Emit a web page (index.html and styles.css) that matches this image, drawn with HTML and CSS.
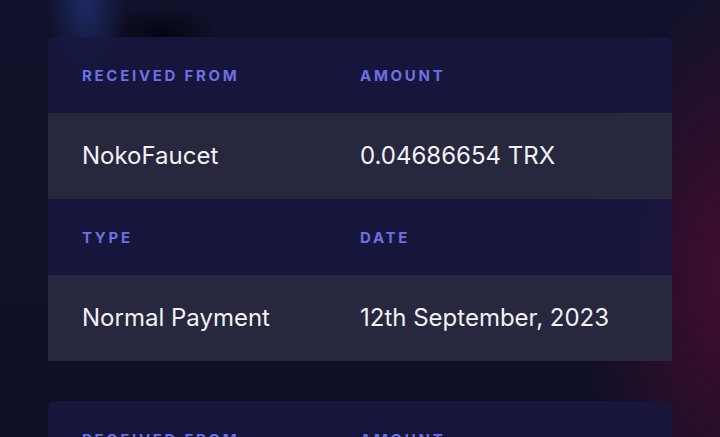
FILE: index.html
```html
<!DOCTYPE html>
<html lang="en">
<head>
<meta charset="utf-8">
<title>Transactions</title>
<link rel="stylesheet" href="styles.css">
</head>
<body>
<main class="page">
  <section class="card">
    <div class="row head">
      <div class="cell">Received From</div>
      <div class="cell">Amount</div>
    </div>
    <div class="row value">
      <div class="cell">NokoFaucet</div>
      <div class="cell">0.04686654 TRX</div>
    </div>
    <div class="row head">
      <div class="cell">Type</div>
      <div class="cell">Date</div>
    </div>
    <div class="row value">
      <div class="cell">Normal Payment</div>
      <div class="cell">12th September, 2023</div>
    </div>
  </section>
  <section class="card">
    <div class="row head">
      <div class="cell">Received From</div>
      <div class="cell">Amount</div>
    </div>
    <div class="row value">
      <div class="cell">NokoFaucet</div>
      <div class="cell">0.04686654 TRX</div>
    </div>
  </section>
</main>
</body>
</html>
```
FILE: styles.css
```css
html, body {
  margin: 0;
  height: 100%;
}
body {
  overflow: hidden;
  font-family: Inter, "Noto Sans", sans-serif;
  background-color: #0f0f25;
  background-image:
    radial-gradient(ellipse 40px 80px at 86px 0px, rgba(30, 44, 105, 0.95), rgba(30, 44, 105, 0) 100%),
    radial-gradient(ellipse 55px 28px at 162px 34px, rgba(4, 5, 16, 0.95), rgba(4, 5, 16, 0) 100%),
    radial-gradient(ellipse 160px 300px at 740px 280px, rgba(80, 12, 50, 0.85), rgba(80, 12, 50, 0) 100%),
    linear-gradient(180deg, #10112a 0%, #0f0f25 100%);
}
.page {
  display: flex;
  flex-direction: column;
  gap: 40px;
  padding: 37px 48px 0;
}
.card {
  border-radius: 7px 7px 0 0;
  overflow: hidden;
  background: rgba(24, 24, 64, 0.84);
}
.row {
  display: grid;
  grid-template-columns: 1fr 1fr;
  align-items: center;
  padding: 0 34px;
}
.head {
  height: 76px;
  color: #6d70e2;
  font-size: 15px;
  font-weight: 700;
  letter-spacing: 2.7px;
  text-transform: uppercase;
}
.value {
  height: 86px;
  background: rgba(42, 42, 62, 0.86);
  color: #f2f2f6;
  font-size: 24px;
  font-weight: 400;
  padding-bottom: 2px;
  box-sizing: border-box;
}
```
